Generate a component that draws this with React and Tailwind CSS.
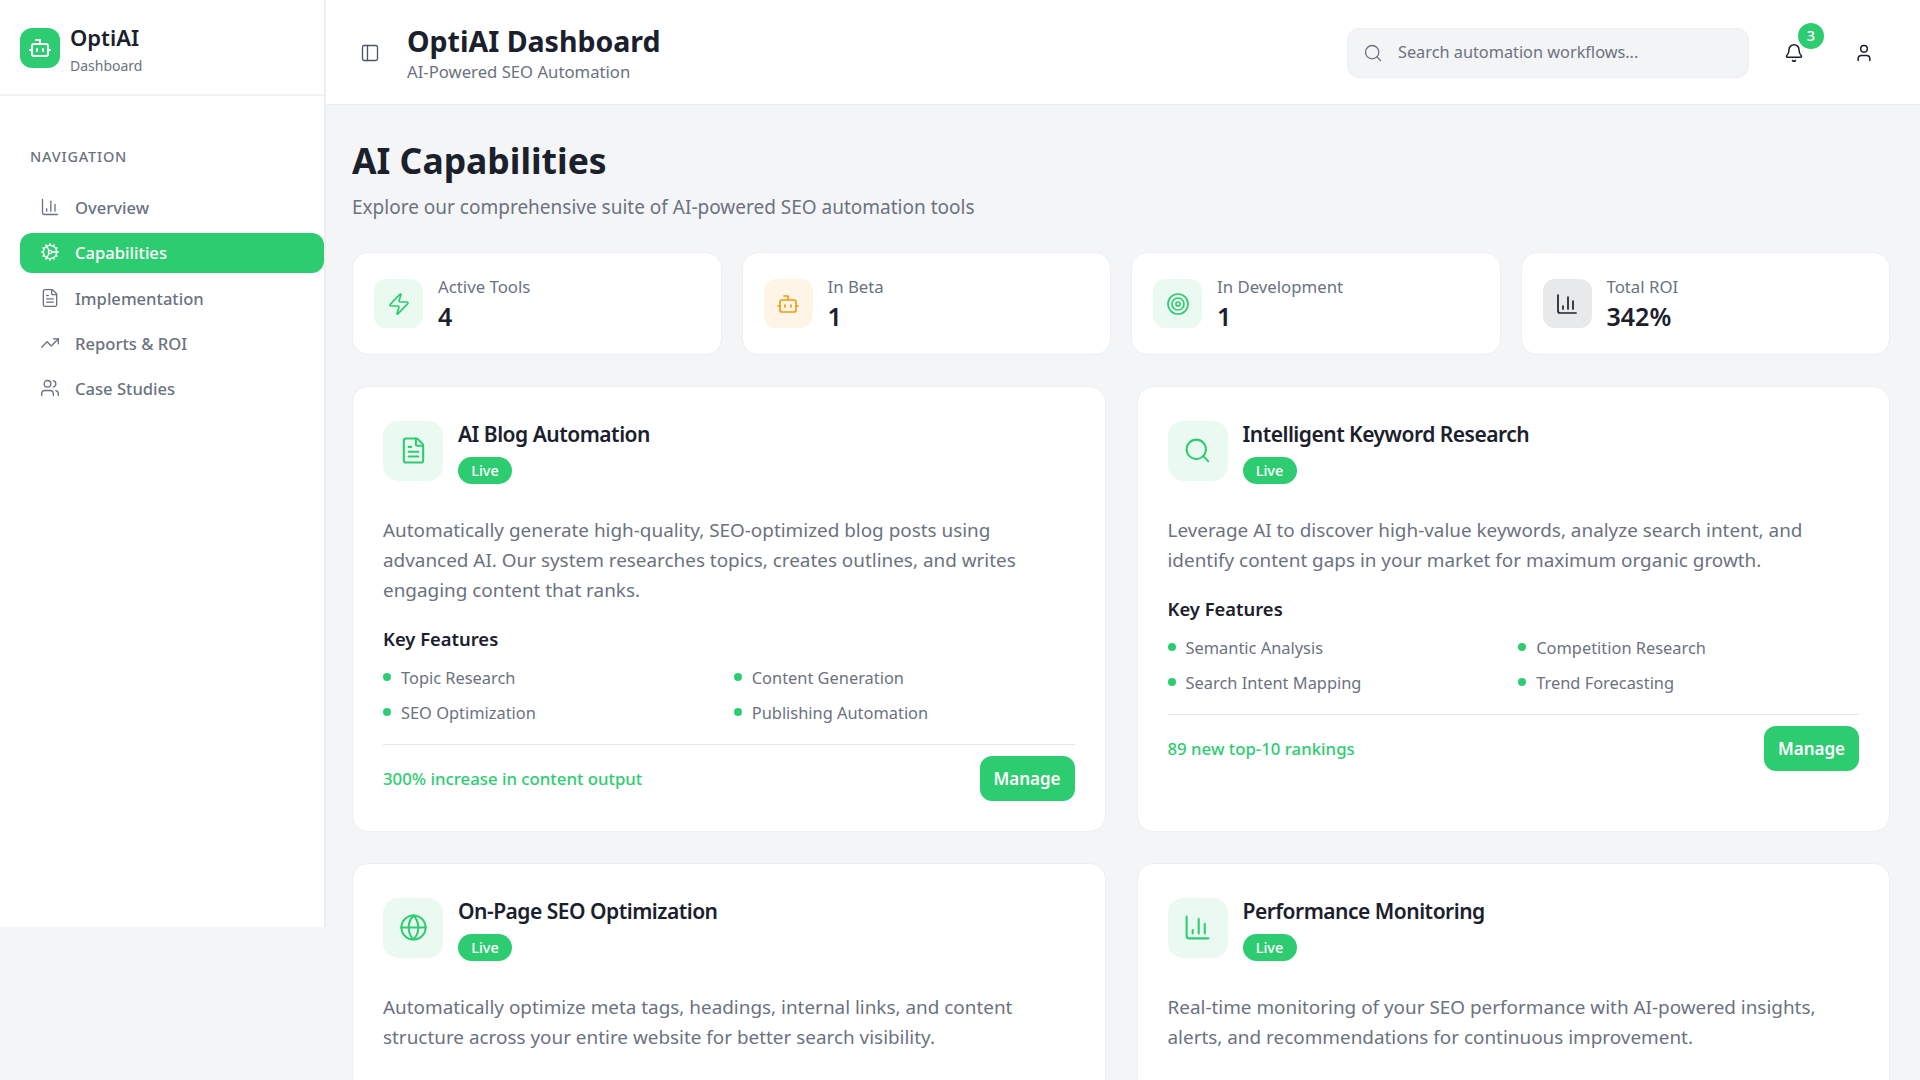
import React from 'react';
import { Bot, ChartColumn, Cog, FileText, TrendingUp, Users, PanelLeft, Search, Bell, User, Zap, Target, Globe } from 'lucide-react';

const navItems = [
  { label: 'Overview', icon: ChartColumn },
  { label: 'Capabilities', icon: Cog, active: true },
  { label: 'Implementation', icon: FileText },
  { label: 'Reports & ROI', icon: TrendingUp },
  { label: 'Case Studies', icon: Users },
];

const stats = [
  { label: 'Active Tools', value: '4', icon: Zap, box: 'bg-[#eafaf1]', tint: 'text-[#2ecc71]' },
  { label: 'In Beta', value: '1', icon: Bot, box: 'bg-[#fef5e7]', tint: 'text-[#f39c12]' },
  { label: 'In Development', value: '1', icon: Target, box: 'bg-[#eafaf1]', tint: 'text-[#2ecc71]' },
  { label: 'Total ROI', value: '342%', icon: ChartColumn, box: 'bg-[#e8e9eb]', tint: 'text-[#1a202c]' },
];

const capabilities = [
  {
    title: 'AI Blog Automation',
    icon: FileText,
    description: 'Automatically generate high-quality, SEO-optimized blog posts using advanced AI. Our system researches topics, creates outlines, and writes engaging content that ranks.',
    features: ['Topic Research', 'Content Generation', 'SEO Optimization', 'Publishing Automation'],
    result: '300% increase in content output',
  },
  {
    title: 'Intelligent Keyword Research',
    icon: Search,
    description: 'Leverage AI to discover high-value keywords, analyze search intent, and identify content gaps in your market for maximum organic growth.',
    features: ['Semantic Analysis', 'Competition Research', 'Search Intent Mapping', 'Trend Forecasting'],
    result: '89 new top-10 rankings',
  },
  {
    title: 'On-Page SEO Optimization',
    icon: Globe,
    description: 'Automatically optimize meta tags, headings, internal links, and content structure across your entire website for better search visibility.',
  },
  {
    title: 'Performance Monitoring',
    icon: ChartColumn,
    description: 'Real-time monitoring of your SEO performance with AI-powered insights, alerts, and recommendations for continuous improvement.',
  },
];

const Sidebar = () => (
  <aside className="w-[326px] h-[927px] shrink-0 bg-white border-r-2 border-[#eceef1]">
    <div className="h-[96px] border-b-2 border-[#eff1f3] pl-5 pt-7 flex items-start gap-[10px]">
      <div className="w-10 h-10 rounded-xl bg-[#2ecc71] flex items-center justify-center text-white">
        <Bot size={24} strokeWidth={2} />
      </div>
      <div>
        <div className="text-[22px] leading-[28px] font-semibold text-[#1a202c] -mt-[5px]">OptiAI</div>
        <div className="text-[14px] leading-[22px] text-[#6b7280] mt-[4px]">Dashboard</div>
      </div>
    </div>
    <div className="pl-5 pt-[50px]">
      <div className="pl-[10px] text-[14.5px] leading-5 font-medium tracking-[0.8px] text-[#6b7280] uppercase">Navigation</div>
      <nav className="mt-[22px] flex flex-col gap-[5.3px]">
        {navItems.map(({ label, icon: Icon, active }) => (
          <div
            key={label}
            className={`h-10 flex items-center gap-[15px] pl-[20px] rounded-xl text-[16.6px] font-medium ${active ? 'bg-[#2ecc71] text-white' : 'text-[#6b7280]'}`}
          >
            <Icon size={20} strokeWidth={1.6} className="-mt-[2px]" />
            <span className="mt-[1px]">{label}</span>
          </div>
        ))}
      </nav>
    </div>
  </aside>
);

const Header = () => (
  <header className="h-[105px] shrink-0 bg-white border-b border-[#eceef1] flex items-center pl-[34px] pr-[46px]">
    <PanelLeft size={20} strokeWidth={1.6} className="text-[#4b5563] mt-[1px]" />
    <div className="ml-[27px] mt-[2px]">
      <h1 className="text-[28.5px] leading-[38px] font-bold text-[#1a202c]">OptiAI Dashboard</h1>
      <p className="text-[16.7px] leading-[24px] text-[#6b7280]">AI-Powered SEO Automation</p>
    </div>
    <div className="ml-auto mt-[1px] w-[402px] h-[50px] rounded-xl bg-[#f3f4f6] border border-[#eceef1] flex items-center pl-[15px] gap-[15px] text-[16.3px] text-[#6b7280]">
      <Search size={20} strokeWidth={1.6} />
      <span>Search automation workflows...</span>
    </div>
    <div className="relative ml-[35px] mt-[1px] text-[#1a202c]">
      <Bell size={20} strokeWidth={1.8} />
      <span className="absolute -top-[20px] left-[14px] w-[26px] h-[26px] rounded-full bg-[#2ecc71] text-white text-[14.5px] font-medium flex items-center justify-center">3</span>
    </div>
    <User size={20} strokeWidth={1.8} className="ml-[50px] mt-[1px] text-[#1a202c]" />
  </header>
);

const StatCard = ({ label, value, icon: Icon, box, tint }) => (
  <div className="h-[103px] bg-white rounded-2xl border border-[#eceef1] flex items-center pl-[21px] gap-[15px]">
    <div className={`w-[49px] h-[49px] rounded-xl flex items-center justify-center ${box} ${tint}`}>
      <Icon size={24} strokeWidth={1.7} />
    </div>
    <div>
      <div className="text-[16.8px] leading-[25px] text-[#6b7280] mt-[1px]">{label}</div>
      <div className="text-[25px] leading-[35px] font-semibold text-[#1a202c]">{value}</div>
    </div>
  </div>
);

const CapabilityCard = ({ title, icon: Icon, description, features, result }) => (
  <div className="min-h-[240px] bg-white rounded-2xl border border-[#eceef1] p-[30px]">
    <div className="flex items-center gap-[15px]">
      <div className="w-[60px] h-[60px] rounded-[15px] bg-[#eafaf1] flex items-center justify-center text-[#2ecc71]">
        <Icon size={29} strokeWidth={1.7} />
      </div>
      <div>
        <h3 className="text-[21px] leading-[36px] font-semibold tracking-[-0.5px] text-[#1a202c] -mt-[1px]">{title}</h3>
        <span className="mt-[5px] inline-flex items-center justify-center h-[27px] w-[54px] rounded-full bg-[#2ecc71] text-white text-[14.5px] font-medium">Live</span>
      </div>
    </div>
    <p className="mt-[31px] text-[18.9px] leading-[30px] text-[#6b7280]">{description}</p>
    {features && (
      <>
        <h4 className="mt-[19px] text-[18.4px] leading-[30px] font-semibold text-[#1a202c]">Key Features</h4>
        <ul className="mt-[11px] grid grid-cols-2 gap-x-[10px] gap-y-[10px]">
          {features.map((f) => (
            <li key={f} className="flex items-center gap-[10px] text-[16.4px] leading-[25px] text-[#6b7280]">
              <span className="w-2 h-2 rounded-full bg-[#2ecc71] shrink-0 -mt-[2px]" />
              {f}
            </li>
          ))}
        </ul>
        <div className="mt-[19px] pt-[11px] border-t border-[#e5e7eb] flex items-center justify-between">
          <span className="text-[16.8px] font-medium text-[#2ecc71]">{result}</span>
          <button className="w-[95px] h-[45px] rounded-xl bg-[#2ecc71] text-white text-[17px] font-semibold">Manage</button>
        </div>
      </>
    )}
  </div>
);

export default function App() {
  return (
    <div className="h-screen overflow-hidden flex bg-[#f3f5f7] font-['Noto_Sans',sans-serif]">
      <Sidebar />
      <main className="flex-1 min-w-0 flex flex-col">
        <Header />
        <div className="pl-[26px] pr-[30px] pt-[30px]">
          <h2 className="text-[35.5px] leading-[50px] font-bold text-[#1a202c]">AI Capabilities</h2>
          <p className="mt-[7px] text-[19px] leading-[30px] text-[#6b7280]">Explore our comprehensive suite of AI-powered SEO automation tools</p>
          <div className="mt-[30px] grid grid-cols-4 gap-5">
            {stats.map((s) => <StatCard key={s.label} {...s} />)}
          </div>
          <div className="mt-[31px] grid grid-cols-2 gap-x-[31px] gap-y-[31px]">
            {capabilities.map((c) => <CapabilityCard key={c.title} {...c} />)}
          </div>
        </div>
      </main>
    </div>
  );
}
